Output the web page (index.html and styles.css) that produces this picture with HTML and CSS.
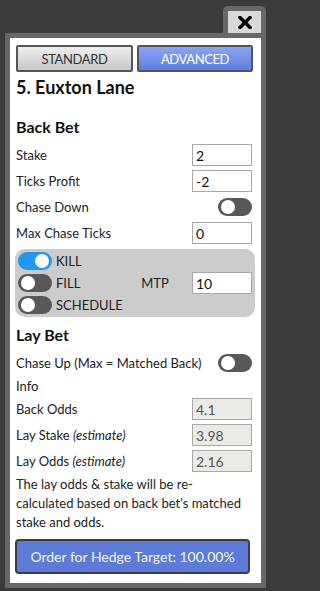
FILE: index.html
```html
<!DOCTYPE html>
<html>
<head>
<meta charset="utf-8">
<link rel="stylesheet" href="styles.css">
</head>
<body>
<div class="closebar">
  <div class="close-tab">
    <div class="close-inner">
      <svg width="14" height="13" viewBox="0 0 14 13"><path d="M2 1.5 L12 11.5 M12 1.5 L2 11.5" stroke="#000" stroke-width="3.4" stroke-linecap="square"/></svg>
    </div>
  </div>
</div>
<div class="panel">
  <div class="tabs">
    <div class="tab tab-std">STANDARD</div>
    <div class="tab tab-adv">ADVANCED</div>
  </div>
  <div class="title">5. Euxton Lane</div>

  <div class="heading h-back">Back Bet</div>
  <div class="rows">
    <div class="row"><span>Stake</span><input class="field" value="2"></div>
    <div class="row"><span>Ticks Profit</span><input class="field" value="-2"></div>
    <div class="row"><span>Chase Down</span><span class="toggle"><span class="knob"></span></span></div>
    <div class="row"><span>Max Chase Ticks</span><input class="field" value="0"></div>
  </div>

  <div class="graybox">
    <div class="tcol">
      <div class="trow"><span class="toggle on"><span class="knob"></span></span><span>KILL</span></div>
      <div class="trow"><span class="toggle"><span class="knob"></span></span><span>FILL</span></div>
      <div class="trow"><span class="toggle"><span class="knob"></span></span><span>SCHEDULE</span></div>
    </div>
    <span class="mtp">MTP</span>
    <input class="field" value="10">
  </div>

  <div class="heading h-lay">Lay Bet</div>
  <div class="rows">
    <div class="row"><span>Chase Up (Max = Matched Back)</span><span class="toggle"><span class="knob"></span></span></div>
    <div class="info">Info</div>
    <div class="row"><span>Back Odds</span><input class="field ro" value="4.1" readonly></div>
    <div class="row"><span>Lay Stake <em>(estimate)</em></span><input class="field ro" value="3.98" readonly></div>
    <div class="row"><span>Lay Odds <em>(estimate)</em></span><input class="field ro" value="2.16" readonly></div>
  </div>
  <p class="note">The lay odds &amp; stake will be re-calculated based on back bet's matched stake and odds.</p>
  <div class="order">Order for Hedge Target: 100.00%</div>
</div>
</body>
</html>
```
FILE: styles.css
```css
* { box-sizing: border-box; }
html, body { margin: 0; padding: 0; }
body {
  background: #3b3b3b;
  font-family: Lato, "Noto Sans", sans-serif;
  font-size: 13px;
  color: #222;
  width: 270px;
  height: 591px;
  overflow: hidden;
}
.closebar {
  display: flex;
  justify-content: flex-end;
  padding: 6px 4px 0 0;
}
.close-tab {
  width: 43px;
  height: 27px;
  background: #676767;
  border-radius: 5px 5px 0 0;
  padding: 5px 5px 0 5px;
}
.close-inner {
  height: 22px;
  background: #d8d8d8;
  display: flex;
  align-items: center;
  justify-content: center;
}
.close-inner svg { display: block; margin-top: 1px; }
.panel {
  margin: 0 4px 0 5px;
  border: 5px solid #676767;
  background: #fff;
  padding: 7px 6px 9px 6px;
}
.tabs {
  display: flex;
  gap: 4px;
}
.tab {
  height: 27px;
  border: 2px solid #555;
  border-radius: 2px;
  display: flex;
  align-items: center;
  justify-content: center;
  font-size: 13px;
  letter-spacing: -0.4px;
}
.tab-std {
  width: 117px;
  color: #333;
  background: linear-gradient(#eeeeee, #c6c6c6);
}
.tab-adv {
  width: 116px;
  color: #fff;
  background: linear-gradient(#8aa4f4, #5f7de0);
}
.title {
  margin-top: 4px;
  font-size: 18px;
  font-weight: bold;
  line-height: 22px;
  color: #111;
}
.heading {
  font-size: 16px;
  font-weight: bold;
  line-height: 20px;
  color: #111;
}
.h-back { margin-top: 19px; margin-bottom: 7px; }
.h-lay { margin-top: 8px; margin-bottom: 7px; }
.rows {
  display: flex;
  flex-direction: column;
  gap: 4px;
}
.row {
  height: 22px;
  display: flex;
  align-items: center;
  justify-content: space-between;
  padding-right: 3px;
  line-height: 22px;
}
.row em { font-style: italic; }
.info { line-height: 16px; height: 16px; }
.field {
  width: 60px;
  height: 22px;
  border: 1px solid #a8a8a8;
  background: #fff;
  font-family: Lato, "Noto Sans", sans-serif;
  font-size: 14px;
  color: #111;
  padding: 0 3px;
  margin: 0;
  outline: none;
}
.field.ro {
  background: #ebebe6;
  color: #555;
}
.toggle {
  position: relative;
  display: inline-block;
  width: 34px;
  height: 18px;
  border-radius: 9px;
  background: #585858;
  flex: none;
}
.toggle .knob {
  position: absolute;
  top: 2px;
  left: 3px;
  width: 14px;
  height: 14px;
  border-radius: 50%;
  background: #fff;
}
.toggle.on { background: #2196f3; }
.toggle.on .knob { left: 17px; }
.graybox {
  margin: 5px 0 0 -1px;
  background: #cccccc;
  border-radius: 10px;
  padding: 1px 3px 1px 3px;
  display: flex;
  align-items: center;
}
.tcol {
  width: 124px;
  display: flex;
  flex-direction: column;
}
.trow {
  height: 22px;
  display: flex;
  align-items: center;
  gap: 4px;
}
.mtp { width: 51px; }
.note {
  margin: 3px 10px 0 0;
  line-height: 19px;
}
.order {
  margin-top: 7px;
  width: 235px;
  margin-left: -1px;
  height: 35px;
  background: #5b7bd6;
  border: 2px solid #3e3e3e;
  border-radius: 4px;
  color: #f4f4f4;
  font-size: 14px;
  display: flex;
  align-items: center;
  justify-content: center;
}
```
